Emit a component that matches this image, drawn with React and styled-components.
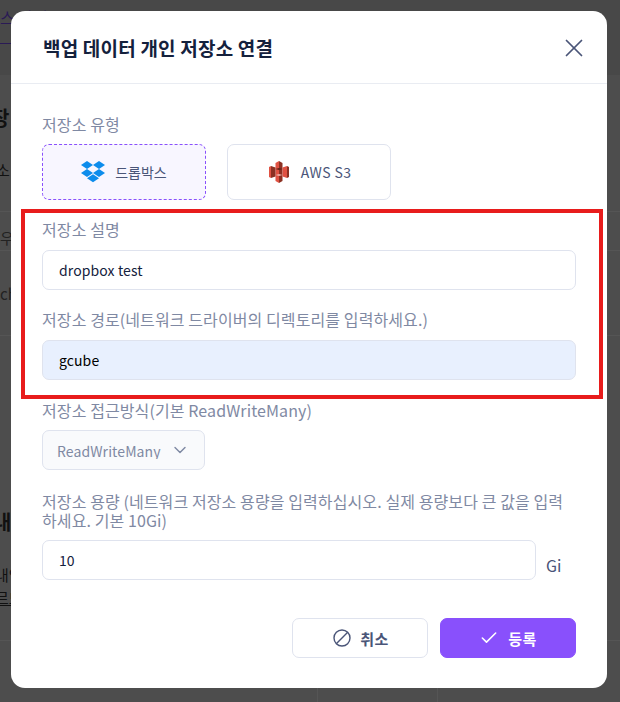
import React from 'react';
import styled, { createGlobalStyle } from 'styled-components';
import { X, ChevronDown, Check } from 'lucide-react';

const GlobalStyle = createGlobalStyle`
  html, body {
    margin: 0;
    padding: 0;
    background: #4d4d4d;
  }
  * {
    box-sizing: border-box;
  }
  body {
    font-family: "Noto Sans CJK KR", "Noto Sans", sans-serif;
  }
`;

const Stage = styled.div`
  position: relative;
  width: 620px;
  height: 702px;
  overflow: hidden;
  background: #4d4d4d;
`;

/* page behind the dialog, mostly hidden */
const BackPage = styled.div`
  height: 100%;
  color: #111;
`;

const BackHeader = styled.div`
  height: 75px;
  background: #484848;
`;

const BackTab = styled.div`
  width: 52px;
  height: 44px;
  padding-top: 5px;
  border-bottom: 1px solid #2a1a55;
  color: #2a1a55;
  font-size: 16px;
  line-height: 24px;
  white-space: nowrap;
`;

const BackHeading = styled.div`
  height: 30px;
  width: 11px;
  margin-top: ${({ $top }) => $top}px;
  font-size: 20px;
  font-weight: 700;
  line-height: 30px;
  white-space: nowrap;
  overflow: hidden;
  text-indent: ${({ $indent }) => $indent ?? -7}px;
`;

const BackLine = styled.div`
  height: 20px;
  width: 11px;
  margin-top: ${({ $top }) => $top}px;
  font-size: 15px;
  line-height: 20px;
  white-space: nowrap;
  overflow: hidden;
  text-indent: ${({ $indent }) => $indent ?? -5}px;
  text-decoration: ${({ $link }) => ($link ? 'underline' : 'none')};
`;

const BackRow = styled.div`
  height: ${({ $height }) => $height}px;
  padding-top: ${({ $pad }) => $pad ?? 0}px;
  margin-top: ${({ $top }) => $top ?? 0}px;
  border-top: 1px solid #555;
  color: #222;
  font-size: 15px;
  line-height: 20px;
`;

const BackRowText = styled.div`
  width: 11px;
  overflow: hidden;
  white-space: nowrap;
`;

const BackTableRow = styled.div`
  margin-top: 32px;
  height: 62px;
  border-top: 1px solid #555;
  display: grid;
  grid-template-columns: 318px 120px 1fr;
`;

const BackCell = styled.div`
  border-right: 1px solid #555;
`;

const Dialog = styled.div`
  position: absolute;
  left: 11px;
  top: 11px;
  width: 596px;
  height: 677px;
  background: #fff;
  border-radius: 14px;
  display: flex;
  flex-direction: column;
`;

const Header = styled.header`
  height: 73px;
  flex: none;
  border-bottom: 1px solid #e9ecf2;
  padding: 1px 18px 0 32px;
  display: flex;
  align-items: center;
  justify-content: space-between;
`;

const Title = styled.h2`
  margin: 0;
  font-size: 19px;
  font-weight: 700;
  letter-spacing: 0.2px;
  color: #14213d;
`;

const CloseButton = styled.button`
  border: 0;
  background: none;
  padding: 0;
  width: 30px;
  height: 30px;
  color: #4a5578;
  display: flex;
`;

const Body = styled.div`
  flex: 1;
  padding: 31px 31px 30px;
  display: flex;
  flex-direction: column;
`;

const Label = styled.label`
  display: block;
  font-size: 16px;
  line-height: 19px;
  letter-spacing: 0.1px;
  color: #7f89a3;
  margin-bottom: ${({ $gap }) => $gap ?? 11}px;
`;

const TileRow = styled.div`
  display: flex;
  gap: 21px;
  margin-bottom: 20px;
`;

const Tile = styled.div`
  width: 164px;
  height: 56px;
  padding-left: ${({ $active }) => ($active ? 0 : 2)}px;
  border-radius: 7px;
  border: 1px ${({ $active }) => ($active ? 'dashed #8950fc' : 'solid #dfe3ee')};
  background: ${({ $active }) => ($active ? '#f8f6ff' : '#fff')};
  display: flex;
  align-items: center;
  justify-content: center;
  gap: ${({ $active }) => ($active ? 10 : 12)}px;
  font-size: 14px;
  letter-spacing: ${({ $active }) => ($active ? 0 : 0.4)}px;
  color: #4a5578;
`;

const Marked = styled.div`
  position: relative;
  display: flex;
  flex-direction: column;
  gap: 20px;
  margin-bottom: 21px;

  &::after {
    content: '';
    position: absolute;
    inset: -11px -27px -19px -21px;
    border: 4px solid #e81c1c;
    pointer-events: none;
  }
`;

const Field = styled.div``;

const Input = styled.input`
  display: block;
  width: ${({ $width }) => $width ?? '100%'};
  height: 40px;
  padding: 0 16px;
  border: 1px solid #dfe3ee;
  border-radius: 7px;
  outline: none;
  font: inherit;
  font-size: 14px;
  letter-spacing: 0.1px;
  color: ${({ $filled }) => ($filled ? '#000' : '#14213d')};
  background: ${({ $filled }) => ($filled ? '#e8f0fe' : '#fff')};
`;

const SelectBox = styled.div`
  width: 163px;
  height: 40px;
  padding: 0 14px;
  border: 1px solid #dfe3ee;
  border-radius: 7px;
  background: #f9fafc;
  color: #7f89a3;
  font-size: 14px;
  display: flex;
  align-items: center;
  justify-content: space-between;
  margin-bottom: 22px;
`;

const SelectText = styled.span`
  width: 104px;
  height: 17px;
  line-height: 19px;
  letter-spacing: 0.1px;
  overflow: hidden;
  white-space: nowrap;
`;

const CapacityRow = styled.div`
  display: flex;
  align-items: flex-end;
  gap: 10px;
`;

const Unit = styled.span`
  font-size: 16px;
  line-height: 30px;
  color: #4a5578;
`;

const Footer = styled.footer`
  margin-top: auto;
  display: flex;
  justify-content: flex-end;
  gap: 12px;
`;

const Button = styled.button`
  width: 136px;
  height: 40px;
  padding: 0 0 0 ${({ $primary }) => ($primary ? 0 : 2)}px;
  border-radius: 7px;
  border: 1px solid ${({ $primary }) => ($primary ? '#8950fc' : '#dfe3ee')};
  background: ${({ $primary }) => ($primary ? '#8950fc' : '#fff')};
  color: ${({ $primary }) => ($primary ? '#fff' : '#4a5578')};
  font: inherit;
  font-size: 15px;
  font-weight: 700;
  letter-spacing: 0.4px;
  display: flex;
  align-items: center;
  justify-content: center;
  gap: 9px;
`;

const DropboxIcon = () => (
  <svg width="24" height="22" viewBox="0 0 24 22" fill="#0d8cec">
    <path d="M6 0 0 4l6 4 6-4zM18 0l-6 4 6 4 6-4zM0 12l6 4 6-4-6-4zM18 8l-6 4 6 4 6-4zM6 17.3l6 4 6-4-6-4z" />
  </svg>
);

const S3Icon = () => (
  <svg width="20" height="22" viewBox="0 0 20 22">
    <path fill="#e05243" d="M10 0 6.5 2v18L10 22z" />
    <path fill="#8c3123" d="M10 0l3.5 2v18L10 22z" />
    <path fill="#e05243" d="M2 5 0 6v10l2 1z" />
    <path fill="#8c3123" d="M2 5l4.5 1.5v9L2 17z" />
    <path fill="#8c3123" d="M18 5l2 1v10l-2 1z" />
    <path fill="#e05243" d="M18 5l-4.5 1.5v9L18 17z" />
    <path fill="#5e1f18" d="M6.5 8 10 7l3.5 1-3.5 1z" />
    <path fill="#f2b0a9" d="M6.5 14 10 15l3.5-1-3.5-1z" />
  </svg>
);

const CancelIcon = () => (
  <svg width="18" height="18" viewBox="0 0 18 18" fill="none" stroke="currentColor" strokeWidth="1.4">
    <circle cx="9" cy="9" r="8" />
    <path d="M14.7 3.3 3.3 14.7" />
  </svg>
);

export default function App() {
  return (
    <>
      <GlobalStyle />
      <Stage>
        <BackPage>
          <BackHeader>
            <BackTab>스 관리</BackTab>
          </BackHeader>
          <BackHeading $top={28} $indent={-9}>장</BackHeading>
          <BackLine $top={27} $indent={-4}>소</BackLine>
          <BackRow $top={31} $height={39} $pad={16}>
            <BackRowText>우</BackRowText>
          </BackRow>
          <BackRow $height={85} $pad={33}>
            <BackRowText>ch</BackRowText>
          </BackRow>
          <BackRow $height={112} />
          <BackHeading $top={60}>내장</BackHeading>
          <BackLine $top={28}>내임</BackLine>
          <BackLine $top={3} $link>르므</BackLine>
          <BackTableRow>
            <BackCell />
            <BackCell />
          </BackTableRow>
        </BackPage>
        <Dialog>
          <Header>
            <Title>백업 데이터 개인 저장소 연결</Title>
            <CloseButton>
              <X size={30} strokeWidth={1.4} />
            </CloseButton>
          </Header>
          <Body>
            <Label $gap={10}>저장소 유형</Label>
            <TileRow>
              <Tile $active>
                <DropboxIcon />
                드롭박스
              </Tile>
              <Tile>
                <S3Icon />
                AWS S3
              </Tile>
            </TileRow>
            <Marked>
              <Field>
                <Label>저장소 설명</Label>
                <Input defaultValue="dropbox test" />
              </Field>
              <Field>
                <Label>저장소 경로(네트워크 드라이버의 디렉토리를 입력하세요.)</Label>
                <Input $filled defaultValue="gcube" />
              </Field>
            </Marked>
            <Label $gap={10}>저장소 접근방식(기본 ReadWriteMany)</Label>
            <SelectBox>
              <SelectText>ReadWriteMany</SelectText>
              <ChevronDown size={20} strokeWidth={1.7} />
            </SelectBox>
            <Label $gap={10}>
              저장소 용량 (네트워크 저장소 용량을 입력하십시오. 실제 용량보다 큰 값을 입력하세요. 기본 10Gi)
            </Label>
            <CapacityRow>
              <Input $width="494px" defaultValue="10" />
              <Unit>Gi</Unit>
            </CapacityRow>
            <Footer>
              <Button>
                <CancelIcon />
                취소
              </Button>
              <Button $primary>
                <Check size={20} strokeWidth={1.9} />
                등록
              </Button>
            </Footer>
          </Body>
        </Dialog>
      </Stage>
    </>
  );
}
